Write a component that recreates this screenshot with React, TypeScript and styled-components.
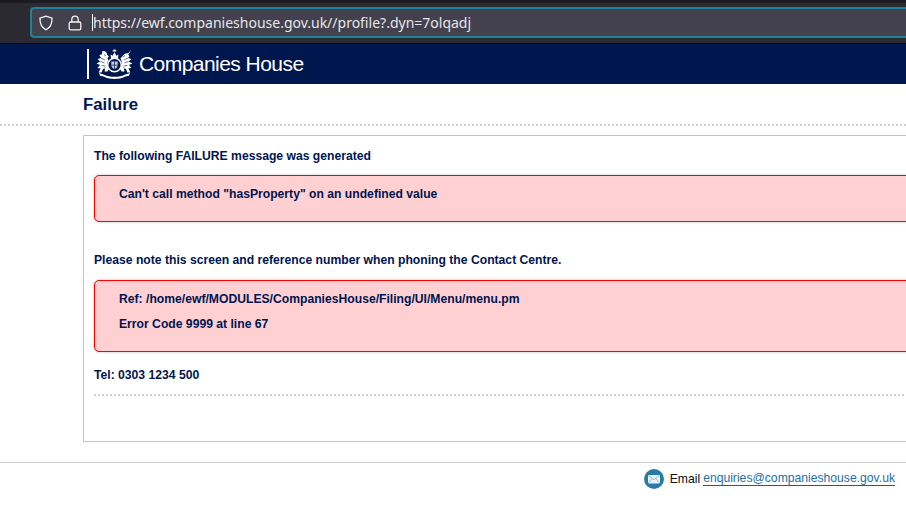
import styled, { createGlobalStyle } from "styled-components";

const GlobalStyle = createGlobalStyle`
  html, body {
    margin: 0;
    padding: 0;
    background: #fff;
    overflow: hidden;
  }
  body {
    width: 906px;
    height: 523px;
    font-family: "Liberation Sans", Arial, sans-serif;
  }
`;

const Page = styled.div`
  width: 906px;
  height: 523px;
  overflow: hidden;
  display: flex;
  flex-direction: column;
`;

const BrowserBar = styled.div`
  height: 44px;
  box-sizing: border-box;
  flex: none;
  padding: 7px 0 5px 30px;
  background: linear-gradient(#1c1b22 0, #1c1b22 3px, #2b2a33 3px);
  border-bottom: 1px solid #0c0c0d;
`;

const UrlBox = styled.div`
  height: 31px;
  width: 890px;
  box-sizing: border-box;
  display: flex;
  align-items: center;
  padding-left: 6px;
  background: #42414d;
  border: 2px solid #1f8296;
  border-right: none;
  border-radius: 4px 0 0 4px;
  color: #fbfbfe;
`;

const BarIcon = styled.svg<{ $gap: number }>`
  flex: none;
  width: 16px;
  height: 16px;
  margin-right: ${(p) => p.$gap}px;
  fill: none;
  stroke: #f3f3f6;
  stroke-width: 1.3;
`;

const Caret = styled.span`
  width: 1px;
  height: 17px;
  background: #fbfbfe;
  flex: none;
`;

const UrlText = styled.span`
  font-family: "Noto Sans", "Open Sans", sans-serif;
  font-size: 14px;
  white-space: nowrap;
  color: #e6e6ea;
`;

const Banner = styled.header`
  height: 40px;
  flex: none;
  background: #00164f;
  display: flex;
  align-items: center;
  padding-left: 87px;
`;

const Divider = styled.span`
  width: 2px;
  height: 30px;
  background: #fff;
  margin-right: 7px;
`;

const Crest = styled.svg`
  width: 37px;
  height: 30px;
  margin-right: 6px;
`;

const BrandName = styled.span`
  color: #fff;
  font-size: 21px;
  letter-spacing: -0.55px;
  line-height: 32px;
`;

const TitleBar = styled.div`
  height: 42px;
  flex: none;
  box-sizing: border-box;
  padding: 11px 0 0 83px;
  border-bottom: 2px dotted #cfcfcf;
`;

const Title = styled.h1`
  margin: 0;
  font-size: 16.8px;
  line-height: 20px;
  font-weight: bold;
  color: #00164f;
`;

const Content = styled.main`
  margin: 9px 0 0 83px;
  width: 1000px;
  height: 307px;
  flex: none;
  box-sizing: border-box;
  border: 1px solid #c2c4cc;
  padding: 13px 10px 0;
`;

const Label = styled.p<{ $gap?: number }>`
  margin: ${(p) => p.$gap ?? 0}px 0 0;
  font-size: 12.16px;
  line-height: 14px;
  font-weight: bold;
  color: #00164f;
`;

const ErrorBox = styled.div<{ $height: number; $gap: number }>`
  height: ${(p) => p.$height}px;
  box-sizing: border-box;
  margin-top: ${(p) => p.$gap}px;
  padding: 11px 24px 0;
  background: #ffd0d2;
  border: 1px solid #ff0000;
  border-radius: 5px;
  box-shadow: 0 0 3px rgba(0, 0, 0, 0.25);
`;

const ErrorLine = styled.p`
  margin: 0 0 11px;
  font-size: 12.16px;
  line-height: 14px;
  font-weight: bold;
  color: #00164f;
`;

const DottedRule = styled.div`
  margin-top: 12px;
  border-top: 2px dotted #cfcfcf;
`;

const Footer = styled.footer`
  margin-top: 20px;
  flex: none;
  border-top: 1px solid #cfd0d4;
  display: flex;
  justify-content: flex-end;
  align-items: center;
  gap: 5px;
  padding: 6px 11px 0 0;
  font-size: 12.16px;
  color: #0b0c0c;
`;

const MailIcon = styled.svg`
  width: 20px;
  height: 20px;
  margin-right: 1px;
`;

const MailLink = styled.a`
  margin-left: -2px;
  color: #1d70a8;
  text-decoration: none;
  border-bottom: 1px solid #00689e;
  line-height: 13px;
`;

function RoyalCrest() {
  return (
    <Crest viewBox="0 0 37 30" aria-hidden="true">
      <g fill="#fff">
        {/* crest lion and crown */}
        <path d="M15 9.5 L14.6 5.6 L16.6 6.8 L18.5 3 L20.4 6.8 L22.4 5.6 L22 9.5 Z" />
        <path d="M17.5 0.4 H19.5 V1.4 H20.4 V2.6 H16.6 V1.4 H17.5 Z" />
        {/* lion, left */}
        <path d="M6.5 2 C9 1.5 11 3 11 5.5 L13 7.5 L11.5 9 L12.6 12 L11.2 13 L11.4 17 L13 20 L11.5 22.5 L8.5 22.5 L9 20 L7 20 L5.6 23.5 L2.6 23.5 L4.6 19.5 L1.5 19 L4 16 L0.6 14.5 L4.2 12.5 L1.6 10 L5 9 L3.4 6 L5.6 5.4 Z" />
        {/* unicorn, right */}
        <path d="M35.5 0.4 L32 4.4 C29.5 4 27 5.5 26 8 L24.4 9 L25.6 12 L25.8 17 L24 20 L25.5 22.5 L28.5 22.5 L28 20 L30 20 L31.4 23.5 L34.4 23.5 L32.4 19.5 L35.4 19 L33 16 L36.4 14.5 L32.8 12.5 L35.4 10 L32 9 L33.4 7.4 L32.4 5.4 Z" />
        {/* motto scroll */}
        <path d="M3 24 L7 25.2 C11 27.4 14.5 27.7 18.5 27.7 C22.5 27.7 26 27.4 30 25.2 L34 24 L33 26.8 L29.4 27.6 C26 29.6 22 30 18.5 30 C15 30 11 29.6 7.6 27.6 L4 26.8 Z" />
      </g>
      {/* garter */}
      <circle cx="18.5" cy="16" r="6.8" fill="#00164f" stroke="#fff" strokeWidth="1.5" />
      {/* quartered shield */}
      <path d="M15.3 12.6 H21.7 V16.6 C21.7 18.4 20 19.6 18.5 20.2 C17 19.6 15.3 18.4 15.3 16.6 Z" fill="#c3cad8" />
      <path d="M18.5 12.6 V20.2 M15.3 16.2 H21.7" stroke="#00164f" strokeWidth="0.7" />
      {/* line work on the supporters */}
      <path d="M4.5 12.5 L8.5 14 M5 9 L9 11 M5.5 16.5 L9.5 17 M8 5.5 L10 7 M7.5 20 L9.5 18.5" stroke="#00164f" strokeWidth="0.6" fill="none" />
      <path d="M32.5 12.5 L28.5 14 M32 9 L28 11 M31.5 16.5 L27.5 17 M29 6.5 L27 8 M29.5 20 L27.5 18.5" stroke="#00164f" strokeWidth="0.6" fill="none" />
      <path d="M11 24.6 C14 25.8 23 25.8 26 24.6" stroke="#00164f" strokeWidth="0.7" fill="none" />
    </Crest>
  );
}

export default function App() {
  return (
    <Page>
      <GlobalStyle />
      <BrowserBar>
        <UrlBox>
          <BarIcon $gap={13} viewBox="0 0 16 16">
            <path d="M8 1.2 L14 3.2 C14.2 8.6 12.4 12.6 8 14.8 C3.6 12.6 1.8 8.6 2 3.2 Z" strokeLinejoin="round" />
          </BarIcon>
          <BarIcon $gap={9} viewBox="0 0 16 16">
            <rect x="2.2" y="7" width="11.6" height="7.8" rx="1.6" />
            <path d="M4.8 7 V4.6 C4.8 2.6 6.2 1.2 8 1.2 C9.8 1.2 11.2 2.6 11.2 4.6 V7" />
          </BarIcon>
          <Caret />
          <UrlText>https://ewf.companieshouse.gov.uk//profile?.dyn=7olqadj</UrlText>
        </UrlBox>
      </BrowserBar>

      <Banner>
        <Divider />
        <RoyalCrest />
        <BrandName>Companies House</BrandName>
      </Banner>

      <TitleBar>
        <Title>Failure</Title>
      </TitleBar>

      <Content>
        <Label>The following FAILURE message was generated</Label>
        <ErrorBox $gap={12} $height={47}>
          <ErrorLine>Can't call method "hasProperty" on an undefined value</ErrorLine>
        </ErrorBox>
        <Label $gap={31}>Please note this screen and reference number when phoning the Contact Centre.</Label>
        <ErrorBox $gap={13} $height={72}>
          <ErrorLine>Ref: /home/ewf/MODULES/CompaniesHouse/Filing/UI/Menu/menu.pm</ErrorLine>
          <ErrorLine>Error Code 9999 at line 67</ErrorLine>
        </ErrorBox>
        <Label $gap={16}>Tel: 0303 1234 500</Label>
        <DottedRule />
      </Content>

      <Footer>
        <MailIcon viewBox="0 0 20 20" aria-hidden="true">
          <circle cx="10" cy="10" r="10" fill="#2a7aa3" />
          <rect x="4" y="6" width="12" height="8.4" rx="0.8" fill="#e8f1f6" />
          <path d="M4.4 6.4 L10 10.8 L15.6 6.4 M4.4 14 L8.2 9.6 M15.6 14 L11.8 9.6" fill="none" stroke="#7fb0ca" strokeWidth="0.8" />
        </MailIcon>
        <span>Email</span>
        <MailLink href="#">enquiries@companieshouse.gov.uk</MailLink>
      </Footer>
    </Page>
  );
}
